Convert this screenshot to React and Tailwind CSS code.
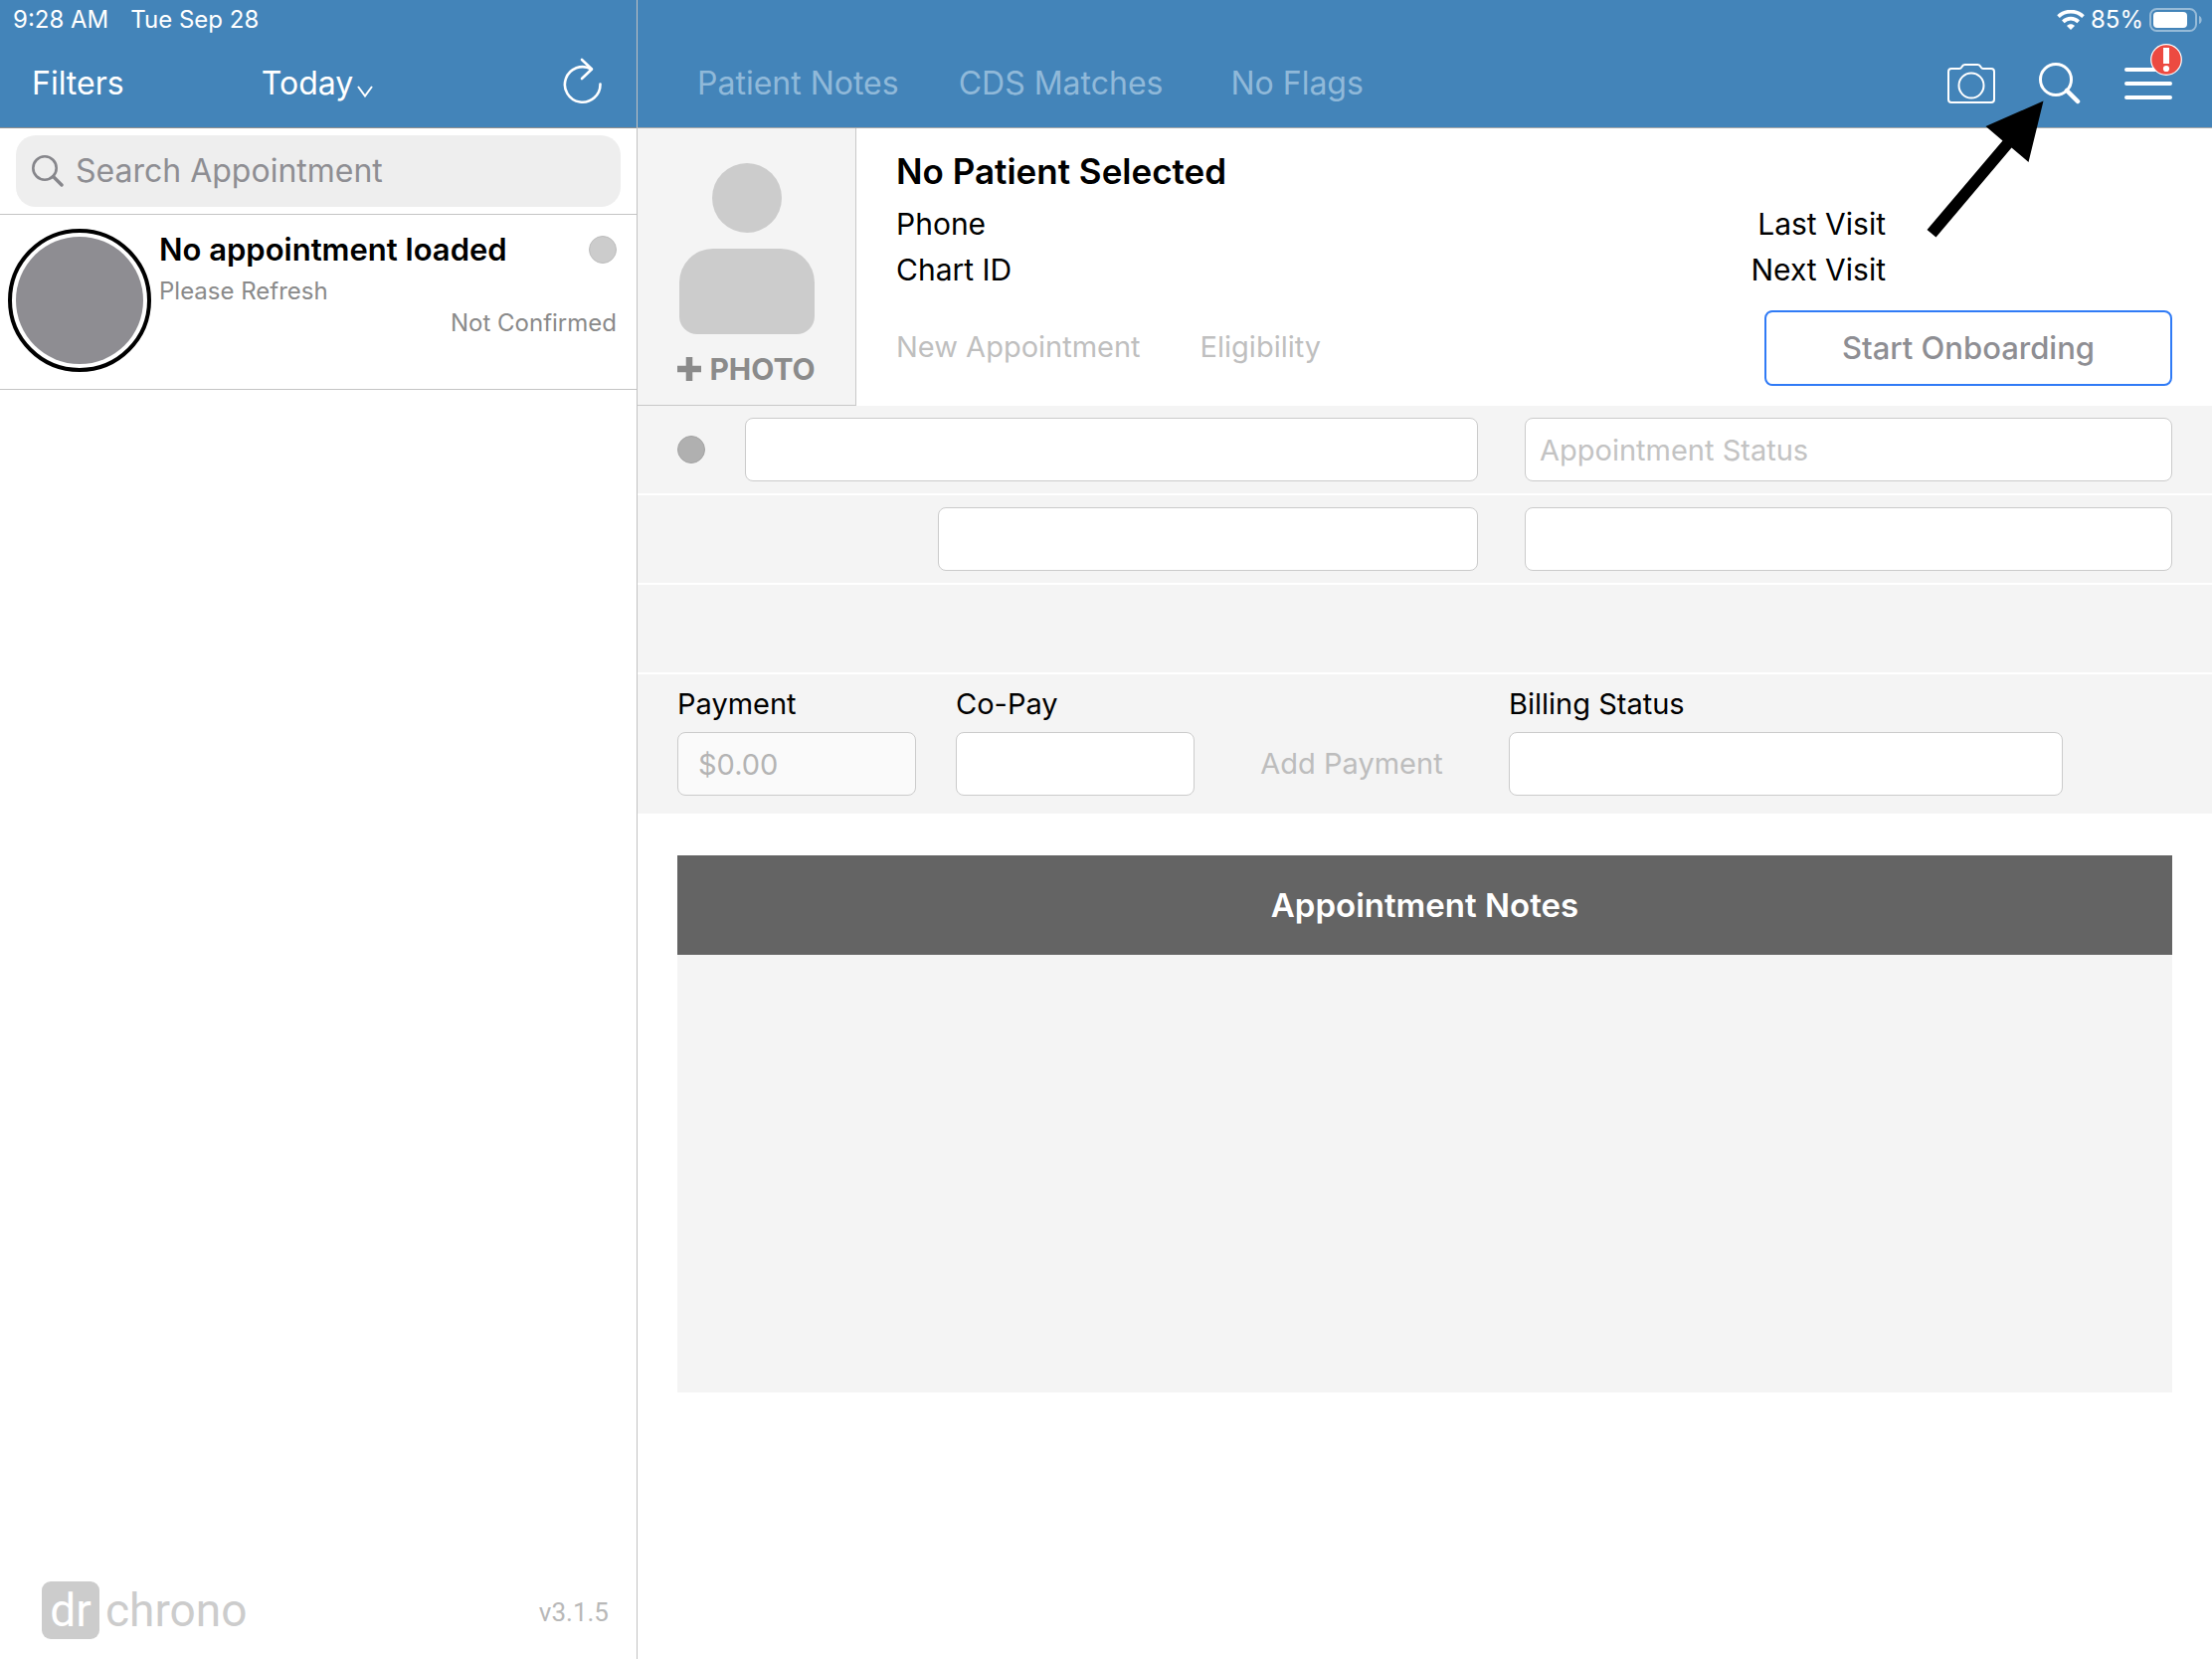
import React from "react";

const field =
  "h-16 w-full min-w-0 rounded-lg border border-[#cbcbcb] bg-white px-[14px] text-[29px] text-black outline-none placeholder:text-[#c3c3c3]";

function StatusLeft() {
  return (
    <div className="flex h-10 items-center gap-[22px] pl-[13px] text-[24px] leading-10 text-white">
      <span>9:28 AM</span>
      <span>Tue Sep 28</span>
    </div>
  );
}

function StatusRight() {
  return (
    <div className="flex h-10 items-center justify-end gap-[6px] pr-[10px] text-[24px] leading-10 text-white">
      <svg width="28" height="20" viewBox="0 0 28 20" fill="none" aria-label="Wi-Fi">
        <path d="M1.5 6.6C8.5 0 19.500 0 26.500 6.600" stroke="white" strokeWidth="3.800" />
        <path d="M6.300 11.800C10.800 7.600 17.200 7.600 21.700 11.800" stroke="white" strokeWidth="3.800" />
        <path d="M10 16C12.200 13.800 15.800 13.800 18 16L14 20Z" fill="white" />
      </svg>
      <span>85%</span>
      <svg width="53" height="24" viewBox="0 0 53 24" fill="none" aria-label="Battery">
        <rect x="1" y="1" width="46" height="22" rx="6.500" stroke="white" strokeOpacity="0.45" strokeWidth="2" />
        <rect x="4" y="4" width="34" height="16" rx="4" fill="white" />
        <path d="M50 8C53.500 9 53.500 15 50 16Z" fill="white" fillOpacity="0.45" />
      </svg>
    </div>
  );
}

function Sidebar() {
  return (
    <aside className="flex w-[641px] shrink-0 flex-col border-r border-[#c2c2c2]">
      <header className="border-b border-[#8f8f8f] bg-[#4384b9]">
        <StatusLeft />
        <nav className="flex h-[88px] items-center justify-between pl-8 pr-[34px] text-[32px] text-white">
          <button type="button" className="w-24 text-left">Filters</button>
          <button type="button" className="flex items-center gap-1">
            Today
            <svg width="16" height="12" viewBox="0 0 16 12" className="mt-4" fill="none" aria-hidden="true">
              <path d="M1 1L8 10.500L15 1" stroke="white" strokeWidth="2" />
            </svg>
          </button>
          <button type="button" aria-label="Refresh" className="flex w-24 justify-end">
            <svg width="40" height="52" viewBox="0 0 40 52" fill="none" aria-hidden="true">
              <path d="M37.500 26.500A17.800 17.800 0 1 1 28.500 11.500" stroke="white" strokeWidth="2.600" strokeLinecap="round" />
              <path d="M19 2L29 11.500L19 21" stroke="white" strokeWidth="2.600" strokeLinecap="round" strokeLinejoin="round" />
            </svg>
          </button>
        </nav>
      </header>

      <div className="border-b border-[#c4c4c4] px-4 py-[7px]">
        <label className="flex h-[72px] items-center gap-3 rounded-[20px] bg-[#eeeeee] px-4">
          <svg width="32" height="32" viewBox="0 0 32 32" fill="none" className="shrink-0" aria-hidden="true">
            <circle cx="13" cy="13" r="11.700" stroke="#86868b" strokeWidth="2.600" />
            <path d="M21.500 21.500L30 30" stroke="#86868b" strokeWidth="3.400" strokeLinecap="round" />
          </svg>
          <input
            type="search"
            aria-label="Search Appointment"
            placeholder="Search Appointment"
            className="w-full min-w-0 bg-transparent text-[32px] outline-none placeholder:text-[#8e8e93]"
          />
        </label>
      </div>

      <ul>
        <li className="flex gap-2 border-b border-[#c4c4c4] pb-[17px] pl-2 pr-5 pt-[14px]">
          <div className="h-36 w-36 shrink-0 rounded-full border-4 border-black p-1">
            <div className="h-full w-full rounded-full bg-[#8e8d92]" />
          </div>
          <div className="min-w-0 flex-1">
            <div className="flex h-[42px] items-center justify-between">
              <h2 className="text-[31px] font-semibold leading-[42px] text-black">No appointment loaded</h2>
              <span className="h-7 w-7 rounded-full border border-[#bdbdbd] bg-[#cccccc]" />
            </div>
            <p className="mt-[5px] text-[24px] leading-8 text-[#8a8a8a]">Please Refresh</p>
            <p className="text-right text-[24px] leading-8 text-[#8a8a8a]">Not Confirmed</p>
          </div>
        </li>
      </ul>

      <footer className="mt-auto flex items-center justify-between pb-5 pl-[42px] pr-7">
        <div className="flex items-center gap-[6px] font-[Roboto,sans-serif] text-[46px] leading-[58px] text-[#cccccc]">
          <span className="h-[58px] w-[58px] rounded-[9px] bg-[#cccccc] text-center text-white">dr</span>
          <span>chrono</span>
        </div>
        <span className="pt-1 font-[Roboto,sans-serif] text-[26px] text-[#b8b8b8]">v3.1.5</span>
      </footer>
    </aside>
  );
}

function MainHeader() {
  return (
    <header className="border-b border-[#a8a8a8] bg-[#4384b9]">
      <StatusRight />
      <div className="flex h-[88px] items-center justify-between pl-[60px] pr-10">
        <nav className="flex items-center gap-[60px] text-[32px] text-[#90b9d9]">
          <button type="button">Patient Notes</button>
          <button type="button">CDS Matches</button>
          <button type="button" className="pl-2">No Flags</button>
        </nav>
        <div className="flex items-center gap-11">
          <button type="button" aria-label="Camera">
            <svg width="48" height="40" viewBox="0 0 48 40" fill="none" stroke="white" strokeWidth="2" strokeLinejoin="round">
              <path d="M4 5H12Q13.500 5 14.300 3.500Q15.500 1 17.500 1H30.500Q32.500 1 33.700 3.500Q34.500 5 36 5H44Q47 5 47 8V36Q47 39 44 39H4Q1 39 1 36V8Q1 5 4 5Z" />
              <circle cx="24" cy="22" r="12.500" />
            </svg>
          </button>
          <button type="button" aria-label="Search">
            <svg width="42" height="42" viewBox="0 0 42 42" fill="none" stroke="white">
              <circle cx="17" cy="17" r="15.500" strokeWidth="3" />
              <path d="M28 28L39 39" strokeWidth="4.500" strokeLinecap="round" />
            </svg>
          </button>
          <button type="button" aria-label="Menu" className="relative">
            <svg width="48" height="32" viewBox="0 0 48 32" fill="none" stroke="white" strokeWidth="4" strokeLinecap="round">
              <path d="M2 2H46M2 16H46M2 30H46" />
            </svg>
            <svg width="32" height="32" viewBox="0 0 32 32" className="absolute -right-[10px] -top-6" aria-label="Alert">
              <circle cx="16" cy="16" r="15.300" fill="#ec4a41" stroke="white" strokeWidth="1.200" />
              <rect x="13" y="4" width="6" height="16" fill="white" />
              <circle cx="16" cy="25" r="3.100" fill="white" />
            </svg>
          </button>
        </div>
      </div>
    </header>
  );
}

function PatientSummary() {
  return (
    <section className="flex">
      <button
        type="button"
        className="flex w-[220px] shrink-0 flex-col items-center border-b border-r border-[#c8c8c8] bg-[#f4f4f4] pt-[35px]"
      >
        <svg width="136" height="172" viewBox="0 0 136 172" fill="#cccccc" aria-hidden="true">
          <circle cx="68" cy="35" r="35" />
          <path d="M34 86H102A34 34 0 0 1 136 120V154A18 18 0 0 1 118 172H18A18 18 0 0 1 0 154V120A34 34 0 0 1 34 86Z" />
        </svg>
        <span className="mt-[15px] flex items-center gap-2 text-[30px] font-bold leading-10 text-[#8b8b8b]">
          <svg width="24" height="24" viewBox="0 0 22 22" fill="#8b8b8b" aria-hidden="true">
            <path d="M8 0H14V8H22V14H14V22H8V14H0V8H8Z" />
          </svg>
          PHOTO
        </span>
      </button>
      <div className="flex flex-1 justify-between px-10 pb-5 pt-5">
        <div className="pb-4">
          <h1 className="text-[35px] font-semibold leading-[46px] text-black">No Patient Selected</h1>
          <dl className="mt-[7px] text-[30px] leading-[46px] text-black">
            <dt>Phone</dt>
            <dt>Chart ID</dt>
          </dl>
          <div className="mt-8 flex gap-[60px] text-[29px] leading-[46px] text-[#bfbfbf]">
            <button type="button">New Appointment</button>
            <button type="button">Eligibility</button>
          </div>
        </div>
        <div className="flex w-[410px] flex-col justify-end">
          <dl className="flex flex-col items-end self-start text-[30px] leading-[46px] text-black">
            <dt className="flex w-[122px] justify-end whitespace-nowrap">Last Visit</dt>
            <dt className="flex w-[122px] justify-end whitespace-nowrap">Next Visit</dt>
          </dl>
          <button
            type="button"
            className="mt-[18px] h-[76px] rounded-lg border-2 border-[#307bf6] bg-white text-[31px] font-medium text-[#8e8e93]"
          >
            Start Onboarding
          </button>
        </div>
      </div>
    </section>
  );
}

function AppointmentForm() {
  const row = "grid h-[88px] grid-cols-[805fr_651fr] items-center gap-[47px] bg-[#f4f4f4] px-10";
  return (
    <form className="flex flex-col gap-[2px]">
      <div className={row}>
        <div className="flex items-center gap-10">
          <span className="h-7 w-7 shrink-0 rounded-full border border-[#a4a4a4] bg-[#b0b0b0]" />
          <input aria-label="Appointment" className={field} />
        </div>
        <input aria-label="Appointment Status" placeholder="Appointment Status" className={field} />
      </div>
      <div className={row}>
        <div className="pl-[262px]">
          <input aria-label="Date" className={field} />
        </div>
        <input aria-label="Location" className={field} />
      </div>
      <div className={row} />
      <div className="flex items-end bg-[#f4f4f4] pb-[18px] pl-10 pr-[150px] pt-[7px] text-[29px]">
        <label className="w-60">
          <span className="block leading-[46px]">Payment</span>
          <input
            placeholder="$0.00"
            className="mt-[5px] h-16 w-full rounded-lg border border-[#cbcbcb] bg-[#fafafa] px-5 text-[29px] outline-none placeholder:text-[#b4b4b4]"
          />
        </label>
        <label className="ml-10 w-60">
          <span className="block leading-[46px]">Co-Pay</span>
          <input className={`${field} mt-[5px]`} />
        </label>
        <button type="button" className="h-16 w-[316px] text-[#bdbdbd]">Add Payment</button>
        <label className="flex-1">
          <span className="block leading-[46px]">Billing Status</span>
          <input className={`${field} mt-[5px]`} />
        </label>
      </div>
    </form>
  );
}

function AppointmentNotes() {
  return (
    <section className="mx-10 mt-[42px]">
      <h2 className="bg-[#646464] text-center text-[33px] font-semibold leading-[100px] text-white">Appointment Notes</h2>
      <textarea aria-label="Appointment Notes" className="block h-[440px] w-full resize-none bg-[#f4f4f4] p-5 text-[29px] outline-none" />
    </section>
  );
}

export default function App() {
  return (
    <div className="relative flex min-h-screen bg-white font-[Inter,'Liberation_Sans',sans-serif]">
      <Sidebar />
      <main className="min-w-0 flex-1">
        <MainHeader />
        <PatientSummary />
        <AppointmentForm />
        <AppointmentNotes />
      </main>
      <svg
        width="118"
        height="139"
        viewBox="0 0 118 139"
        className="pointer-events-none absolute right-[169px] top-[100px]"
        aria-hidden="true"
      >
        <path d="M117.500 1.500L59.500 27L76.500 41.500L0.500 131L9.500 138.500L85.500 48.500L102.500 63Z" fill="black" />
      </svg>
    </div>
  );
}
